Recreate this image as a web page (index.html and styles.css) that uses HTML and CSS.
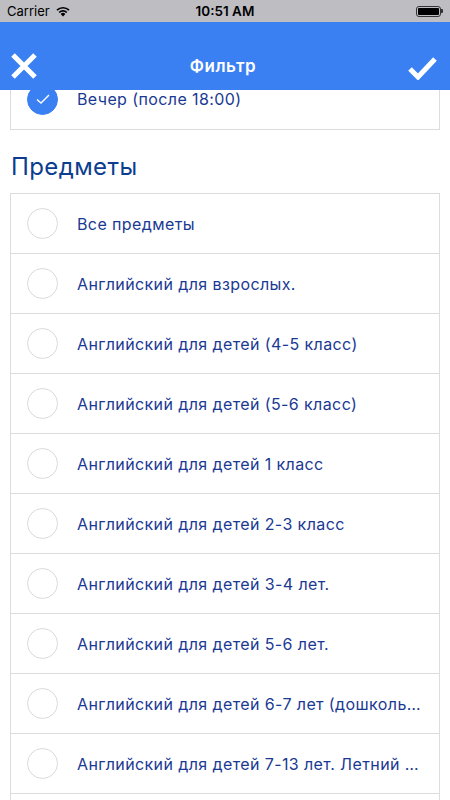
FILE: index.html
```html
<!DOCTYPE html>
<html lang="ru">
<head>
<meta charset="utf-8">
<link rel="stylesheet" href="styles.css">
</head>
<body>
<div class="status">
  <div class="status-left">Carrier
    <svg class="wifi" width="16" height="12" viewBox="0 0 16 12"><path d="M8 11.5 L5.6 8.9 A3.6 3.6 0 0 1 10.4 8.9 Z" fill="#000"/><path d="M3.6 6.9 A6.3 6.3 0 0 1 12.4 6.9 L11.2 8.1 A4.6 4.6 0 0 0 4.8 8.1 Z" fill="#000"/><path d="M1.4 4.6 A9.4 9.4 0 0 1 14.6 4.6 L13.4 5.8 A7.7 7.7 0 0 0 2.6 5.8 Z" fill="#000"/></svg>
  </div>
  <div class="status-time">10:51 AM</div>
  <div class="status-right">
    <div class="battery"><div class="battery-fill"></div></div><div class="battery-tip"></div>
  </div>
</div>
<header class="nav">
  <svg class="nav-icon" width="28" height="28" viewBox="0 0 28 28"><path d="M3 3 L25 25 M25 3 L3 25" stroke="#fff" stroke-width="5" stroke-linecap="butt"/></svg>
  <div class="nav-title">Фильтр</div>
  <svg class="nav-icon" width="30" height="24" viewBox="0 0 30 24"><path d="M2 13 L10 21 L27 3" stroke="#fff" stroke-width="5" fill="none" stroke-linecap="butt" stroke-linejoin="miter"/></svg>
</header>
<main class="content">
  <div class="card card-top">
    <div class="row">
      <span class="radio checked"><svg width="16" height="12" viewBox="0 0 16 12"><path d="M2 6.5 L6 10 L14 2" stroke="#fff" stroke-width="1.4" fill="none"/></svg></span>
      <span class="label">Вечер (после 18:00)</span>
    </div>
  </div>
  <h2 class="section">Предметы</h2>
  <div class="card">
    <div class="row"><span class="radio"></span><span class="label">Все предметы</span></div>
    <div class="row"><span class="radio"></span><span class="label">Английский для взрослых.</span></div>
    <div class="row"><span class="radio"></span><span class="label">Английский для детей (4-5 класс)</span></div>
    <div class="row"><span class="radio"></span><span class="label">Английский для детей (5-6 класс)</span></div>
    <div class="row"><span class="radio"></span><span class="label">Английский для детей 1 класс</span></div>
    <div class="row"><span class="radio"></span><span class="label">Английский для детей 2-3 класс</span></div>
    <div class="row"><span class="radio"></span><span class="label">Английский для детей 3-4 лет.</span></div>
    <div class="row"><span class="radio"></span><span class="label">Английский для детей 5-6 лет.</span></div>
    <div class="row"><span class="radio"></span><span class="label">Английский для детей 6-7 лет (дошкольники)</span></div>
    <div class="row"><span class="radio"></span><span class="label">Английский для детей 7-13 лет. Летний лагерь</span></div>
    <div class="row"><span class="radio"></span></div>
  </div>
</main>
</body>
</html>
```

FILE: styles.css
```css
* { box-sizing: border-box; }
html, body { margin: 0; padding: 0; }
body {
  width: 450px;
  height: 800px;
  overflow: hidden;
  background: #fff;
  font-family: Inter, Roboto, sans-serif;
}
.status {
  height: 22px;
  background: #bdbdc2;
  display: flex;
  align-items: center;
  justify-content: space-between;
  padding: 0 7px;
  font-size: 13px;
  color: #000;
}
.status-left { display: flex; align-items: center; gap: 5px; width: 100px; }
.wifi { margin-top: -1px; }
.status-time {
  font-weight: 600;
  font-size: 13.5px;
}
.status-right { width: 100px; display: flex; justify-content: flex-end; align-items: center; }
.battery {
  width: 25px; height: 11px;
  border: 1px solid #333;
  border-radius: 3px;
  padding: 1px;
}
.battery-fill { width: 100%; height: 100%; background: #000; border-radius: 1px; }
.battery-tip { width: 2px; height: 4px; background: #333; border-radius: 0 1px 1px 0; }
.nav {
  height: 68px;
  background: #3a80f3;
  display: flex;
  align-items: flex-end;
  justify-content: space-between;
  padding: 0 12px 10px 10px;
  position: relative;
  z-index: 2;
}
.nav-title {
  color: #fff;
  font-size: 17px;
  font-weight: 600;
  line-height: 28px;
  letter-spacing: 0.5px;
}
.content {
  height: 710px;
  overflow: hidden;
}
.card {
  margin: 0 10px;
  border: 1px solid #dcdcdc;
  border-bottom: none;
}
.card-top {
  margin-top: -21px;
  border-top: none;
  border-bottom: 1px solid #dcdcdc;
}
.card-top .row { border-bottom: none; }
.row {
  height: 60px;
  display: flex;
  align-items: center;
  border-bottom: 1px solid #dcdcdc;
  padding-left: 16px;
  padding-right: 14px;
}
.radio {
  flex: none;
  width: 31px;
  height: 31px;
  border-radius: 50%;
  border: 1px solid #dadada;
  display: flex;
  align-items: center;
  justify-content: center;
}
.radio.checked {
  background: #3a80f3;
  border-color: #3a80f3;
}
.label {
  margin-left: 19px;
  font-size: 16px;
  letter-spacing: 0.4px;
  color: #1a3993;
  white-space: nowrap;
  overflow: hidden;
  text-overflow: ellipsis;
}
.section {
  margin: 0;
  padding: 24px 11px 13px;
  font-size: 24px;
  letter-spacing: 0.4px;
  font-weight: 400;
  color: #0c3d8f;
  line-height: 26px;
}
```
